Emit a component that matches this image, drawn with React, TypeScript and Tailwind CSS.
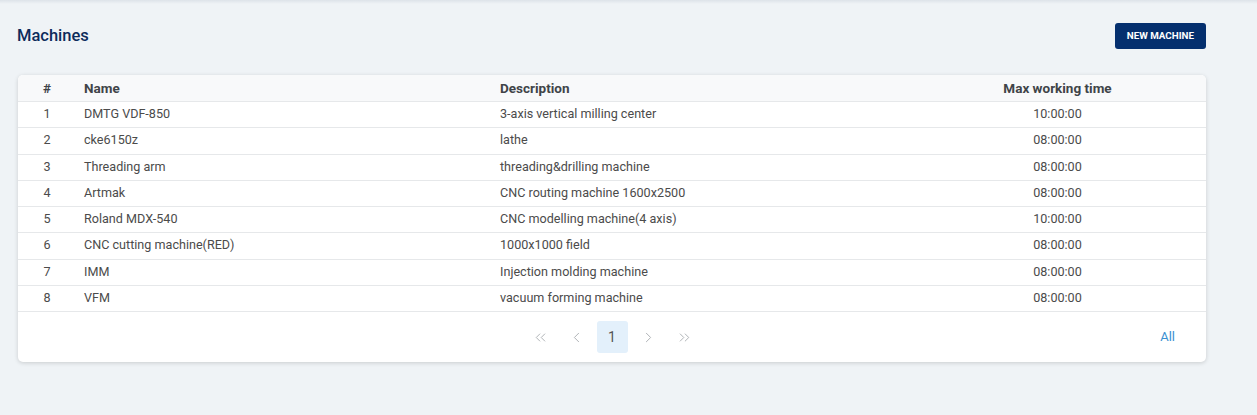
import React from "react";
import { ChevronsLeft, ChevronLeft, ChevronRight, ChevronsRight } from "lucide-react";

const rows = [
  ["1", "DMTG VDF-850", "3-axis vertical milling center", "10:00:00"],
  ["2", "cke6150z", "lathe", "08:00:00"],
  ["3", "Threading arm", "threading&drilling machine", "08:00:00"],
  ["4", "Artmak", "CNC routing machine 1600x2500", "08:00:00"],
  ["5", "Roland MDX-540", "CNC modelling machine(4 axis)", "10:00:00"],
  ["6", "CNC cutting machine(RED)", "1000x1000 field", "08:00:00"],
  ["7", "IMM", "Injection molding machine", "08:00:00"],
  ["8", "VFM", "vacuum forming machine", "08:00:00"],
];

export default function App() {
  return (
    <div
      className="w-[1257px] h-[415px] bg-[#eff3f6] relative overflow-hidden"
      style={{ fontFamily: "Roboto, 'Liberation Sans', sans-serif" }}
    >
      <div className="absolute top-0 left-0 right-0 h-[4px] bg-gradient-to-b from-[#dde3e9] to-transparent" />
      <div className="pl-[17px] pr-[51px] pt-[23px]">
        <div className="flex items-center justify-between h-[26px]">
          <h1 className="text-[16.5px] font-medium text-[#0d2b5b] leading-none">Machines</h1>
          <button className="h-[26px] px-[12px] rounded-[3px] bg-[#042f6e] text-white text-[9.8px] font-bold leading-none">
            NEW MACHINE
          </button>
        </div>
        <div className="mt-[26px] ml-px bg-white rounded-[5px] shadow-[0_1px_4px_rgba(0,0,0,0.16)] overflow-hidden text-[12.6px] text-[#4b4b4b]">
          <div className="flex h-[27px] items-center bg-[#f8f9fa] font-bold text-[13.5px] text-[#404448] border-b border-[#e6e8ea]">
            <div className="w-[58px] text-center">#</div>
            <div className="w-[416px] pl-2">Name</div>
            <div className="w-[417px] pl-2">Description</div>
            <div className="flex-1 text-center">Max working time</div>
          </div>
          {rows.map((r) => (
            <div key={r[0]} className="flex h-[26.25px] items-center border-b border-[#e6e8ea]">
              <div className="w-[58px] text-center">{r[0]}</div>
              <div className="w-[416px] pl-2">{r[1]}</div>
              <div className="w-[417px] pl-2">{r[2]}</div>
              <div className="flex-1 text-center">{r[3]}</div>
            </div>
          ))}
          <div className="relative h-[50px] flex items-center justify-center">
            <div className="flex items-center gap-[5px] text-[#a9adb1]">
              <span className="w-[31px] h-[32px] flex items-center justify-center">
                <ChevronsLeft size={17} strokeWidth={1.3} />
              </span>
              <span className="w-[31px] h-[32px] flex items-center justify-center">
                <ChevronLeft size={17} strokeWidth={1.3} />
              </span>
              <span className="w-[31px] h-[32px] flex items-center justify-center rounded-[3px] bg-[#e3f0fb] text-[#555] text-[14px]">
                1
              </span>
              <span className="w-[31px] h-[32px] flex items-center justify-center">
                <ChevronRight size={17} strokeWidth={1.3} />
              </span>
              <span className="w-[31px] h-[32px] flex items-center justify-center">
                <ChevronsRight size={17} strokeWidth={1.3} />
              </span>
            </div>
            <span className="absolute right-[31px] top-1/2 -translate-y-1/2 text-[#3b8fd1] text-[13px]">All</span>
          </div>
        </div>
      </div>
    </div>
  );
}
